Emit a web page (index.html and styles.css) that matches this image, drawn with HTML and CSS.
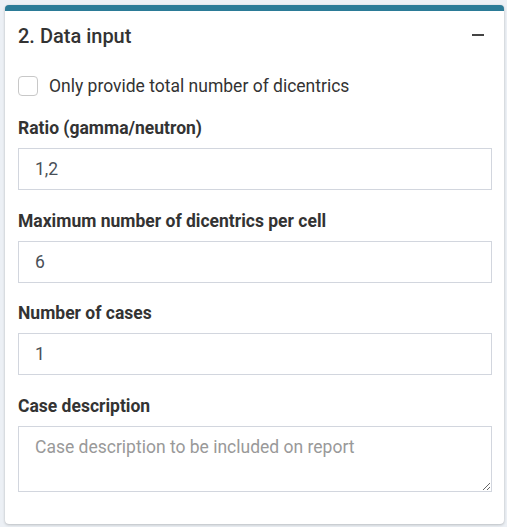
FILE: index.html
```html
<!DOCTYPE html>
<html>
<head>
<meta charset="utf-8">
<link rel="stylesheet" href="styles.css">
</head>
<body>
<div class="card">
  <div class="card-header">
    <h3 class="card-title">2. Data input</h3>
    <span class="collapse-btn"></span>
  </div>
  <div class="card-body">
    <label class="check-row">
      <span class="check-box"></span>
      <span class="check-text">Only provide total number of dicentrics</span>
    </label>
    <div class="form-group">
      <label class="field-label">Ratio (gamma/neutron)</label>
      <input class="field" type="text" value="1,2">
    </div>
    <div class="form-group">
      <label class="field-label">Maximum number of dicentrics per cell</label>
      <input class="field" type="text" value="6">
    </div>
    <div class="form-group">
      <label class="field-label">Number of cases</label>
      <input class="field" type="text" value="1">
    </div>
    <div class="form-group">
      <label class="field-label">Case description</label>
      <textarea class="field area" placeholder="Case description to be included on report"></textarea>
    </div>
  </div>
</div>
</body>
</html>
```

FILE: styles.css
```css
* { box-sizing: border-box; }
html, body {
  margin: 0;
  padding: 0;
  background: #ecf0f5;
  font-family: Roboto, "Liberation Sans", sans-serif;
  color: #333;
}
body {
  padding: 5px 3px 3px 5px;
}
.card {
  width: 499px;
  height: 519px;
  background: #fff;
  border-top: 6px solid #2b7b97;
  border-radius: 4px;
  box-shadow: 0 0 1px rgba(0,0,0,.125), 0 1px 3px rgba(0,0,0,.2);
}
.card-header {
  display: flex;
  align-items: center;
  justify-content: space-between;
  height: 48px;
  padding: 0 20px 0 13px;
}
.card-title {
  margin: 0;
  font-size: 20px;
  font-weight: 500;
  color: #333;
  line-height: 1;
  padding-top: 1px;
}
.collapse-btn {
  display: block;
  width: 12px;
  height: 2px;
  background: #444;
}
.card-body {
  padding: 17px 12px 0 13px;
}
.check-row {
  display: flex;
  align-items: center;
  gap: 11px;
  height: 20px;
  margin-bottom: 19px;
}
.check-box {
  flex: none;
  width: 20px;
  height: 20px;
  border: 1px solid #c8c8c8;
  border-radius: 4px;
  background: #fff;
}
.check-text {
  font-size: 17.5px;
  color: #333;
}
.form-group {
  margin-bottom: 17.7px;
}
.field-label {
  display: block;
  font-size: 17.5px;
  font-weight: 700;
  line-height: 26px;
  margin-bottom: 7px;
  color: #333;
}
.field {
  display: block;
  width: 100%;
  height: 42px;
  border: 1px solid #d2d6de;
  border-radius: 0;
  padding: 0 16px;
  font-family: Roboto, "Liberation Sans", sans-serif;
  font-size: 17.5px;
  color: #495057;
  background: #fff;
  outline: none;
}
.area {
  height: 66px;
  padding: 7px 16px;
  resize: vertical;
  line-height: 26px;
}
.area::placeholder {
  color: #999;
}
```
